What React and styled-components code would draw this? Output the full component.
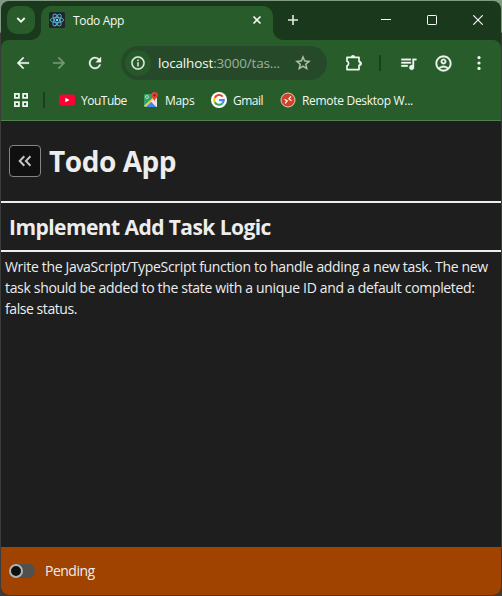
import React from "react";
import styled, { createGlobalStyle } from "styled-components";
import {
  MdArrowBack,
  MdArrowForward,
  MdRefresh,
  MdInfoOutline,
  MdStarBorder,
  MdQueueMusic,
  MdOutlineAccountCircle,
} from "react-icons/md";

const GlobalStyle = createGlobalStyle`
  * { box-sizing: border-box; }
  body {
    margin: 0;
    background: #1a1c1a;
    font-family: "Open Sans", "Noto Sans", sans-serif;
    overflow: hidden;
  }
  svg { display: block; flex: none; }
`;

const Desktop = styled.div`
  width: 502px;
  height: 596px;
  padding: 1px;
  background: linear-gradient(#829a84 0 32px, #3b3d3b 33px 100%);
`;

const Window = styled.div`
  width: 500px;
  height: 594px;
  display: flex;
  flex-direction: column;
  border-radius: 8px;
  overflow: hidden;
  background: #1a381c;
`;

const TitleBar = styled.div`
  height: 39px;
  flex: none;
  display: flex;
  padding-left: 6px;
`;

const TabSearch = styled.div`
  width: 28px;
  height: 28px;
  margin-top: 5px;
  border-radius: 10px;
  background: #285d2b;
  display: grid;
  place-items: center;
`;

const Tab = styled.div`
  position: relative;
  width: 232px;
  height: 34px;
  margin: 5px 0 0 6px;
  padding: 0 11px 6px 8px;
  border-radius: 10px 10px 0 0;
  background: #285d2b;
  display: flex;
  align-items: center;
  &::before,
  &::after {
    content: "";
    position: absolute;
    bottom: 0;
    width: 10px;
    height: 10px;
  }
  &::before {
    left: -10px;
    background: radial-gradient(circle at 0 0, transparent 9.5px, #285d2b 10.2px);
  }
  &::after {
    right: -10px;
    background: radial-gradient(circle at 100% 0, transparent 9.5px, #285d2b 10.2px);
  }
`;

const TabTitle = styled.span`
  flex: 1;
  margin-left: 8px;
  font-size: 12px;
  letter-spacing: -0.35px;
  color: #f4f8f4;
`;

const NewTab = styled.div`
  margin: 13px 0 0 14px;
`;

const WindowControls = styled.div`
  margin-left: auto;
  display: flex;
  height: 38px;
`;

const Control = styled.div`
  width: 46px;
  display: grid;
  place-items: center;
`;

const Chrome = styled.div`
  height: 81px;
  flex: none;
  border-radius: 8px 8px 0 0;
  border-bottom: 1px solid #50824f;
  background: #285d2b;
`;

const Toolbar = styled.div`
  height: 46px;
  display: flex;
  align-items: center;
  color: #f0f6f0;
  svg { stroke-width: 0.4px; }
  path[fill="none"][d^="M0 0h24"] { stroke: none; }
`;

const NavButton = styled.div`
  width: 36px;
  display: grid;
  place-items: center;
  color: ${(p) => (p.$dim ? "#759877" : "#f0f6f0")};
  &:first-child { margin-left: 4px; }
`;

const AddressBar = styled.div`
  width: 206px;
  height: 34px;
  margin-left: 8px;
  padding: 0 15px 0 4px;
  border-radius: 17px;
  background: #264a29;
  display: flex;
  align-items: center;
`;

const SiteInfo = styled.div`
  width: 26px;
  height: 26px;
  border-radius: 50%;
  background: #265829;
  display: grid;
  place-items: center;
  color: #e4eee4;
`;

const Url = styled.span`
  flex: 1;
  margin-left: 7px;
  font-size: 13.5px;
  letter-spacing: -0.16px;
  white-space: nowrap;
  color: #f4f8f4;
`;

const UrlPath = styled.span`
  color: #9db09e;
`;

const ToolIcon = styled.div`
  width: 20px;
  display: grid;
  place-items: center;
  margin-left: ${(p) => p.$gap}px;
`;

const Separator = styled.div`
  width: 2px;
  height: 16px;
  flex: none;
  background: #1c401f;
  margin: 0 ${(p) => p.$after || 0}px 0 ${(p) => p.$before}px;
`;

const Bookmarks = styled.div`
  height: 28px;
  display: flex;
  align-items: center;
  padding-left: 13px;
`;

const Bookmark = styled.div`
  display: flex;
  align-items: center;
  gap: 6px;
  width: ${(p) => p.$width}px;
  font-size: 12px;
  letter-spacing: ${(p) => p.$spacing || "-0.3px"};
  white-space: nowrap;
  color: #f4f8f4;
`;

const Page = styled.main`
  flex: 1;
  display: flex;
  flex-direction: column;
  background: #1e1e1e;
  color: #ededed;
`;

const PageHeader = styled.header`
  height: 82px;
  flex: none;
  display: flex;
  align-items: center;
  gap: 8px;
  padding: 0 8px;
  border-bottom: 2px solid #ededed;
`;

const BackButton = styled.button`
  width: 32px;
  height: 32px;
  padding: 0;
  border: 1px solid #858585;
  border-radius: 4px;
  background: #101010;
  display: grid;
  place-items: center;
`;

const AppTitle = styled.h1`
  margin: 0;
  font-size: 28px;
  line-height: 38px;
  font-weight: 700;
  letter-spacing: -0.45px;
`;

const TaskTitle = styled.h2`
  height: 49px;
  flex: none;
  margin: 0;
  padding: 0 8px;
  border-bottom: 2px solid #ededed;
  font-size: 21px;
  line-height: 48px;
  font-weight: 700;
  letter-spacing: -0.56px;
`;

const Description = styled.p`
  flex: 1;
  margin: 0;
  padding: 4px;
  font-size: 14px;
  line-height: 21px;
`;

const Line = styled.span`
  display: block;
  white-space: nowrap;
  letter-spacing: ${(p) => p.$spacing};
`;

const StatusBar = styled.footer`
  height: 48px;
  flex: none;
  display: flex;
  align-items: center;
  gap: 10px;
  padding: 0 8px;
  background: #a04200;
`;

const Switch = styled.div`
  width: 26px;
  height: 14px;
  border-radius: 7px;
  background: #505050;
`;

const Knob = styled.div`
  width: 14px;
  height: 14px;
  border: 2px solid #b4b4b4;
  border-radius: 50%;
  background: #101010;
`;

const StatusText = styled.span`
  padding-bottom: 1px;
  font-size: 14px;
  letter-spacing: -0.5px;
`;

const ReactLogo = () => (
  <svg width="16" height="16" viewBox="0 0 16 16">
    <rect width="16" height="16" rx="1.5" fill="#20242b" />
    <g fill="none" stroke="#58b8d3" strokeWidth="0.9">
      <ellipse cx="8" cy="8" rx="6.6" ry="2.6" />
      <ellipse cx="8" cy="8" rx="6.6" ry="2.6" transform="rotate(60 8 8)" />
      <ellipse cx="8" cy="8" rx="6.6" ry="2.6" transform="rotate(120 8 8)" />
    </g>
    <circle cx="8" cy="8" r="1.3" fill="#61dafb" />
  </svg>
);

const YouTubeLogo = () => (
  <svg width="16" height="16" viewBox="0 0 16 16">
    <rect y="2.4" width="16" height="11.2" rx="2.8" fill="#ff0033" />
    <path d="M6.3 5.7v4.6l4.2-2.3z" fill="#fff" />
  </svg>
);

const MapsLogo = () => (
  <svg width="16" height="16" viewBox="0 0 16 16">
    <rect x="1" y="2" width="13" height="13" rx="1" fill="#34a164" />
    <path d="M1 14 8 8l6-4v10z" fill="#e4e6e8" />
    <path d="M2.5 15 8 9.5l5.5 5.5z" fill="#4285f4" />
    <path d="m1 14 10.5-10 1.3 1.3L2.8 15z" fill="#fbcd3b" />
    <path d="M4 15l4-4.2 4 4.2z" fill="#4285f4" />
    <path d="m8 9.6 5.5 5.4h.5v-3L9.5 8z" fill="#e4e6e8" />
    <circle cx="4" cy="5" r="1.5" fill="none" stroke="#d9eee0" strokeWidth=".8" />
    <path d="M11.5 0a3.3 3.3 0 0 0-3.3 3.3c0 2.6 2.7 3 3.3 6.5.6-3.5 3.3-3.9 3.3-6.5A3.3 3.3 0 0 0 11.5 0z" fill="#ea4335" />
    <circle cx="11.5" cy="3.3" r="1.2" fill="#8c2820" />
  </svg>
);

const GoogleLogo = () => (
  <svg width="16" height="16" viewBox="0 0 16 16">
    <circle cx="8" cy="8" r="8" fill="#fff" />
    <g fill="none" strokeWidth="2.1">
      <path d="M11.7 4.6A4.8 4.8 0 0 0 3.8 5.7" stroke="#ea4335" />
      <path d="M3.8 5.7a4.8 4.8 0 0 0 0 4.6" stroke="#fbbc05" />
      <path d="M3.8 10.3a4.8 4.8 0 0 0 7.5 1.2" stroke="#34a853" />
      <path d="M11.3 11.5A4.8 4.8 0 0 0 12.8 8.1H8.1" stroke="#4285f4" />
    </g>
  </svg>
);

const RemoteLogo = () => (
  <svg width="16" height="16" viewBox="0 0 16 16">
    <circle cx="8" cy="8" r="7" fill="#d34226" stroke="#d5cfc4" />
    <path d="m4.6 7.2 2.6 1.7-2.1 2.5M11 4.4 8.9 6.9l2.6 1.8" fill="none" stroke="#fff" strokeWidth="1.2" />
  </svg>
);

const AppsIcon = () => (
  <svg width="14" height="14" viewBox="0 0 14 14" fill="none" stroke="#eef5ee" strokeWidth="1.8">
    <path d="M.9.9h4v4h-4zM9.1.9h4v4h-4zM.9 9.1h4v4h-4zM9.1 9.1h4v4h-4z" />
  </svg>
);

const Extension = styled.svg`
  && { stroke-width: 1.7px; }
`;

const ExtensionIcon = () => (
  <Extension width="20" height="20" viewBox="1 0 20 20">
    <path
      d="M3 4.4h12v4.2a1.9 1.9 0 0 1 0 3.8v4.2H3v-3.9a2.3 2.3 0 0 0 0-4.4z"
      fill="none"
      stroke="currentColor"
      strokeLinejoin="round"
    />
    <path d="M6.9 4.2a2.1 2.1 0 0 1 4.2 0zM15.4 8.3a2.1 2.1 0 0 1 0 4.4z" fill="currentColor" />
  </Extension>
);

export default function App() {
  return (
    <>
      <GlobalStyle />
      <Desktop>
        <Window>
          <TitleBar>
            <TabSearch>
              <svg width="10" height="8" viewBox="0 0 10 8" fill="none" stroke="#f4f8f4" strokeWidth="1.8">
                <path d="m1.3 2 3.7 3.7L8.7 2" />
              </svg>
            </TabSearch>
            <Tab>
              <ReactLogo />
              <TabTitle>Todo App</TabTitle>
              <svg width="10" height="10" viewBox="0 0 10 10" stroke="#f4f8f4" strokeWidth="1.7">
                <path d="m1.5 1.5 7 7m0-7-7 7" />
              </svg>
            </Tab>
            <NewTab>
              <svg width="12" height="12" viewBox="0 0 12 12" stroke="#e4ece4" strokeWidth="1.6">
                <path d="M6 1v10M1 6h10" />
              </svg>
            </NewTab>
            <WindowControls>
              <Control>
                <svg width="10" height="10" viewBox="0 0 10 10"><path d="M0 4h10v1H0z" fill="#fff" /></svg>
              </Control>
              <Control>
                <svg width="10" height="10" viewBox="0 0 10 10" fill="none" stroke="#fff">
                  <rect x=".5" y=".5" width="9" height="9" rx=".7" />
                </svg>
              </Control>
              <Control>
                <svg width="10" height="10" viewBox="0 0 10 10" stroke="#fff" strokeWidth="1.1">
                  <path d="m.3.3 9.4 9.4m0-9.4L.3 9.7" />
                </svg>
              </Control>
            </WindowControls>
          </TitleBar>
          <Chrome>
            <Toolbar>
              <NavButton><MdArrowBack size={18} /></NavButton>
              <NavButton $dim><MdArrowForward size={18} /></NavButton>
              <NavButton><MdRefresh size={18} /></NavButton>
              <AddressBar>
                <SiteInfo><MdInfoOutline size={16} /></SiteInfo>
                <Url>localhost<UrlPath>:3000/tas...</UrlPath></Url>
                <MdStarBorder size={18} color="#b4c3b5" />
              </AddressBar>
              <ToolIcon $gap={18}><ExtensionIcon /></ToolIcon>
              <Separator $before={14} />
              <ToolIcon $gap={17}><MdQueueMusic size={19} /></ToolIcon>
              <ToolIcon $gap={15}><MdOutlineAccountCircle size={19} /></ToolIcon>
              <ToolIcon $gap={16}>
                <svg width="4" height="16" viewBox="0 0 4 16" fill="currentColor">
                  <circle cx="2" cy="2.6" r="1.6" />
                  <circle cx="2" cy="8" r="1.6" />
                  <circle cx="2" cy="13.4" r="1.6" />
                </svg>
              </ToolIcon>
            </Toolbar>
            <Bookmarks>
              <AppsIcon />
              <Separator $before={15} $after={14} />
              <Bookmark $width={84} $spacing="-0.5px"><YouTubeLogo />YouTube</Bookmark>
              <Bookmark $width={68}><MapsLogo />Maps</Bookmark>
              <Bookmark $width={69} $spacing="-0.5px"><GoogleLogo />Gmail</Bookmark>
              <Bookmark $width={140}><RemoteLogo />Remote Desktop W...</Bookmark>
            </Bookmarks>
          </Chrome>
          <Page>
            <PageHeader>
              <BackButton aria-label="Back">
                <svg width="14" height="12" viewBox="0 0 14 12" fill="none" stroke="#c4c4c4" strokeWidth="2">
                  <path d="M6.3 1.2 1.7 6l4.6 4.8M12.5 1.2 7.9 6l4.6 4.8" />
                </svg>
              </BackButton>
              <AppTitle>Todo App</AppTitle>
            </PageHeader>
            <TaskTitle>Implement Add Task Logic</TaskTitle>
            <Description>
              <Line $spacing="-0.32px">Write the JavaScript/TypeScript function to handle adding a new task. The new</Line>
              <Line $spacing="-0.33px">task should be added to the state with a unique ID and a default completed:</Line>
              <Line $spacing="-0.43px">false status.</Line>
            </Description>
            <StatusBar>
              <Switch><Knob /></Switch>
              <StatusText>Pending</StatusText>
            </StatusBar>
          </Page>
        </Window>
      </Desktop>
    </>
  );
}
